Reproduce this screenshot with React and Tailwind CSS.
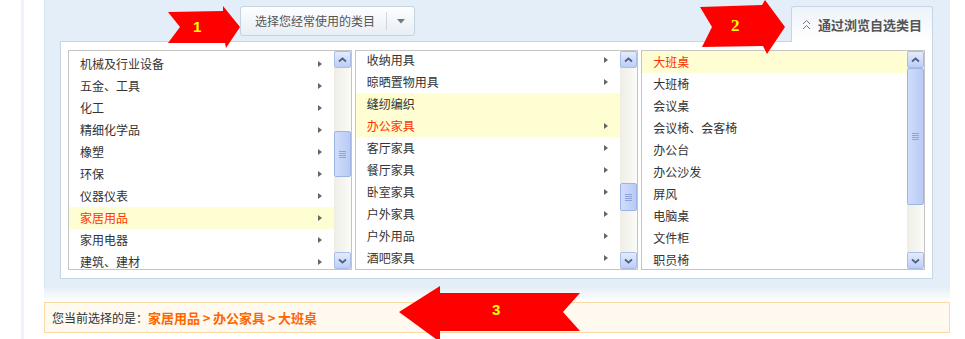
import React from 'react'

const font = "font-['Noto_Sans_CJK_SC','Noto_Sans',sans-serif]"

const industries = [
  { label: '机械及行业设备', arrow: true },
  { label: '五金、工具', arrow: true },
  { label: '化工', arrow: true },
  { label: '精细化学品', arrow: true },
  { label: '橡塑', arrow: true },
  { label: '环保', arrow: true },
  { label: '仪器仪表', arrow: true },
  { label: '家居用品', arrow: true, state: 'selected' },
  { label: '家用电器', arrow: true },
  { label: '建筑、建材', arrow: true },
]

const homeGoods = [
  { label: '收纳用具', arrow: true },
  { label: '晾晒置物用具', arrow: true },
  { label: '缝纫编织', state: 'hover' },
  { label: '办公家具', arrow: true, state: 'selected' },
  { label: '客厅家具', arrow: true },
  { label: '餐厅家具', arrow: true },
  { label: '卧室家具', arrow: true },
  { label: '户外家具', arrow: true },
  { label: '户外用品', arrow: true },
  { label: '酒吧家具', arrow: true },
]

const officeFurniture = [
  { label: '大班桌', state: 'selected' },
  { label: '大班椅' },
  { label: '会议桌' },
  { label: '会议椅、会客椅' },
  { label: '办公台' },
  { label: '办公沙发' },
  { label: '屏风' },
  { label: '电脑桌' },
  { label: '文件柜' },
  { label: '职员椅' },
]

function ScrollButton({ down }) {
  return (
    <div className="flex h-[17px] w-[17px] shrink-0 items-center justify-center rounded-[2px] border border-[#a9bdea] bg-linear-to-b from-[#e4ecfd] to-[#bccdf6]">
      <svg width="9" height="6" viewBox="0 0 9 6">
        <path
          d={down ? 'M1 1.5 L4.5 4.5 L8 1.5' : 'M1 4.5 L4.5 1.5 L8 4.5'}
          fill="none"
          stroke="#4d6185"
          strokeWidth="1.8"
        />
      </svg>
    </div>
  )
}

function Scrollbar({ thumb }) {
  return (
    <div className="flex w-[17px] shrink-0 flex-col bg-linear-to-r from-[#eeede5] to-[#fbfbf8]">
      <ScrollButton />
      <div className="flex-1">
        <div className={`flex w-[17px] items-center justify-center rounded-[2px] border border-[#9fb4e6] bg-linear-to-r from-[#cfdcfb] to-[#b9cbf4] ${thumb}`}>
          <div className="flex flex-col gap-[1px]">
            <div className="h-px w-[7px] bg-[#8ea4da]" />
            <div className="h-px w-[7px] bg-[#8ea4da]" />
            <div className="h-px w-[7px] bg-[#8ea4da]" />
            <div className="h-px w-[7px] bg-[#8ea4da]" />
          </div>
        </div>
      </div>
      <ScrollButton down />
    </div>
  )
}

function ListBox({ items, thumb, offset }) {
  return (
    <div className="flex h-[220px] flex-1 overflow-hidden border border-[#c4c4c4] bg-white">
      <div className="min-w-0 flex-1 overflow-hidden">
        <div className={offset}>
          {items.map((item) => (
            <div
              key={item.label}
              className={`flex h-[22px] items-center justify-between pl-[11px] pr-[12px] text-[12px] ${
                item.state ? 'bg-[#fffdd2]' : ''
              } ${item.state === 'selected' ? 'text-[#ff3300]' : 'text-[#333]'}`}
            >
              <span>{item.label}</span>
              {item.arrow && (
                <span className="h-0 w-0 border-y-[3px] border-l-[4px] border-y-transparent border-l-[#666]" />
              )}
            </div>
          ))}
        </div>
      </div>
      <Scrollbar thumb={thumb} />
    </div>
  )
}

function Arrow({ className, points, label, labelClass, width, height }) {
  return (
    <div className={`absolute ${className}`}>
      <svg width={width} height={height} viewBox={`0 0 ${width} ${height}`}>
        <polygon points={points} fill="#ff0000" />
      </svg>
      <span className={`absolute font-bold text-[#ffff00] ${labelClass}`}>{label}</span>
    </div>
  )
}

export default function App() {
  return (
    <div className={`relative h-[339px] w-[965px] overflow-hidden bg-white ${font}`}>
      <div className="ml-[21px] h-full border-l-[3px] border-[#edf3fa] pl-[20px]">
        {/* Category panel */}
        <div className="w-[906px] border-l border-[#d6e4f1] bg-[#e3eef8] pb-[8px] pl-[15px] pr-[17px] pt-[6px]">
          <div className="flex h-[35px] items-start">
            <div className="ml-[180px] flex h-[30px] w-[175px] items-center rounded-[3px] border border-[#c5d2df] bg-linear-to-b from-[#fdfeff] to-[#e8eef5] pl-[14px] text-[12px] text-[#555]">
              <span>选择您经常使用的类目</span>
              <span className="ml-[11px] h-[18px] w-px bg-[#cdd7e2]" />
              <svg className="ml-[10px]" width="8" height="5" viewBox="0 0 8 5">
                <polygon points="0,0 8,0 4,4.5" fill="#777" />
              </svg>
            </div>
            <div className="relative z-10 ml-auto flex h-[36px] w-[142px] items-center rounded-t-[3px] border-x border-t border-[#c6d6e6] bg-linear-to-b from-[#edf3f9] to-white pl-[10px] text-[13px] font-bold text-[#555]">
              <svg width="9" height="11" viewBox="0 0 9 11">
                <path d="M1 5 L4.5 1.5 L8 5 M1 10 L4.5 6.5 L8 10" fill="none" stroke="#777" strokeWidth="1" />
              </svg>
              <span className="ml-[7px]">通过浏览自选类目</span>
            </div>
          </div>
          <div className="flex gap-[3px] border border-[#c6d6e6] bg-white px-[7px] py-[8px]">
            <ListBox items={industries} thumb="mt-[63px] h-[46px]" offset="mt-[2px]" />
            <ListBox items={homeGoods} thumb="mt-[115px] h-[28px]" offset="-mt-[2px]" />
            <ListBox items={officeFurniture} thumb="mt-0 h-[137px]" offset="mt-0" />
          </div>
        </div>
        <div className="h-[15px] w-[906px] bg-linear-to-b from-[#e6eef6] to-white" />
        {/* Current selection */}
        <div className="flex h-[31px] w-[906px] items-center border border-[#fcdaa6] bg-[#fff9ef] pl-[7px] text-[12px]">
          <span className="text-[#333]">您当前选择的是：</span>
          <span className="flex items-center text-[13px] font-bold text-[#ff6600]">
            家居用品<span className="inline-block w-[13px] text-center">&gt;</span>办公家具<span className="inline-block w-[13px] text-center">&gt;</span>大班桌
          </span>
        </div>
      </div>

      <Arrow
        className="left-[168px] top-[5px]"
        width={73}
        height={44}
        points="0,7 55,6 55,1 72,22 58,43 57,38 0,38 12,22"
        label="1"
        labelClass="left-[25px] top-[11px] text-[15px] font-['Liberation_Sans',sans-serif]"
      />
      <Arrow
        className="left-[700px] top-0"
        width={86}
        height={54}
        points="0,7 62,5 65,0 85,27 67,54 63,46 2,47 12,27"
        label="2"
        labelClass="left-[31px] top-[17px] text-[17px] leading-none font-['Liberation_Serif',serif]"
      />
      <Arrow
        className="left-[399px] top-[286px]"
        width={182}
        height={56}
        points="0,26 41,0 41,7 181,7 164,26 181,45 41,45 41,56"
        label="3"
        labelClass="left-[93px] top-[16px] text-[15px] leading-none font-['Liberation_Sans',sans-serif]"
      />
    </div>
  )
}
